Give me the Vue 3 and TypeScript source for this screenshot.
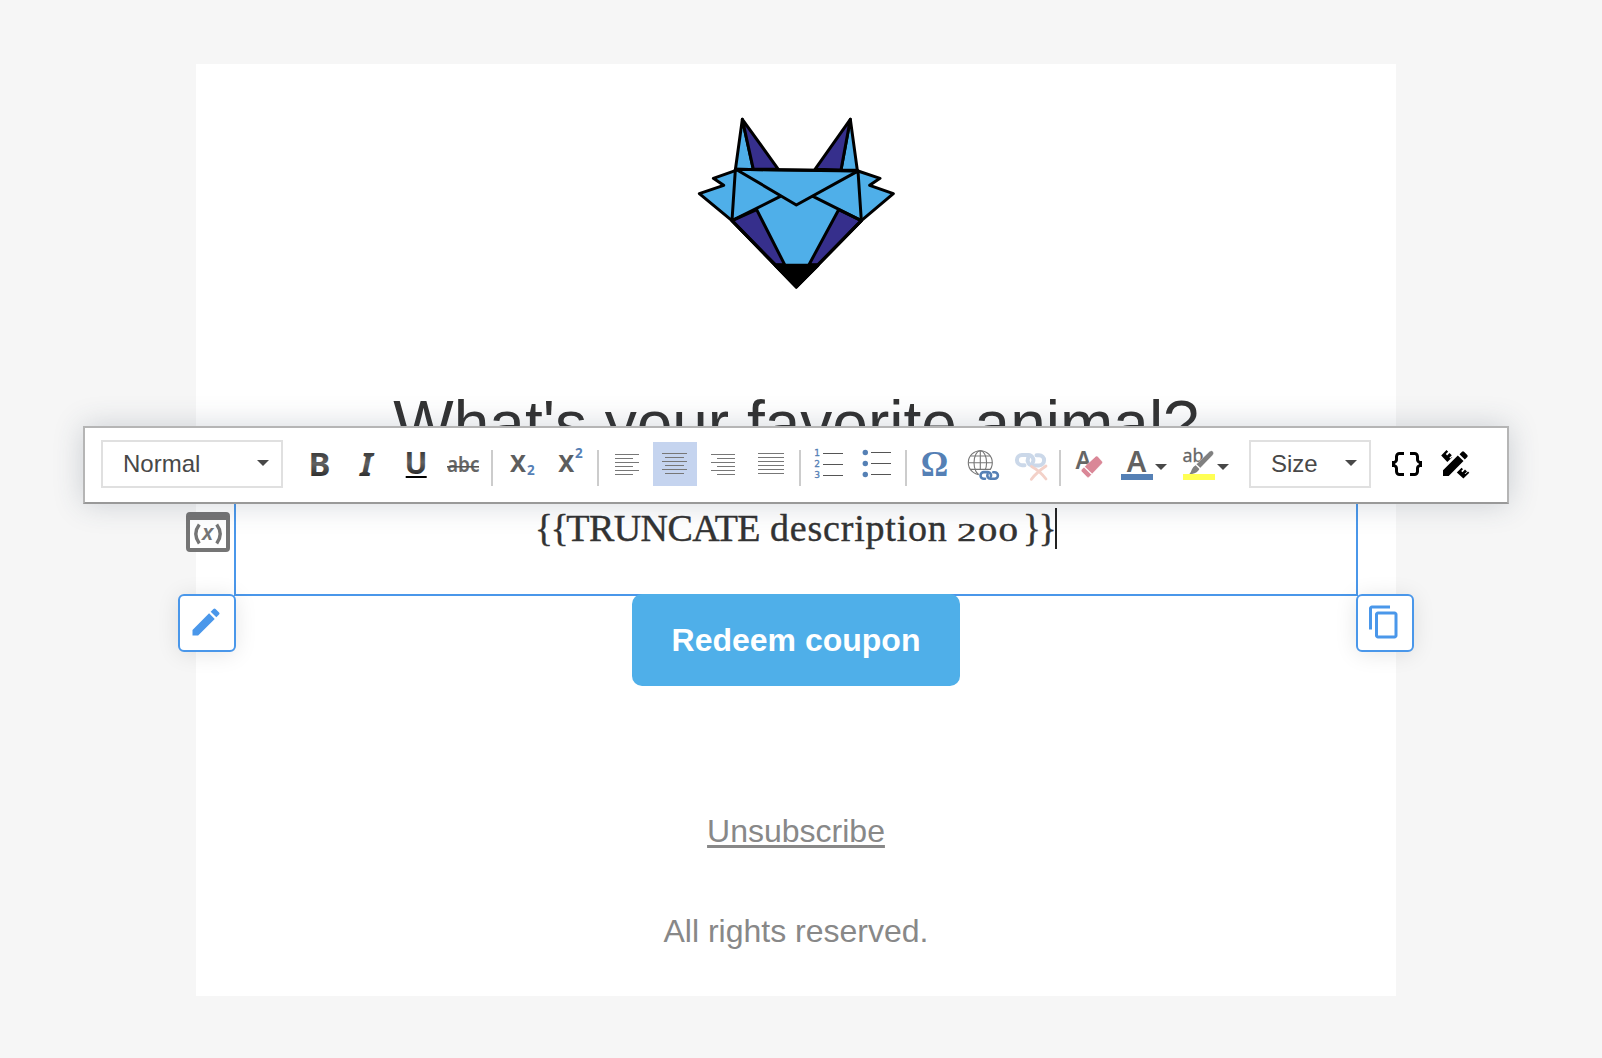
<script setup lang="ts">
const lineYs = [0, 4, 8, 12, 16, 20]

interface AlignTool {
  name: string
  top: number
  long: [number, number]
  short: [number, number]
  active?: boolean
}

const alignTools: AlignTool[] = [
  { name: 'Align left', top: 12, long: [10, 34], short: [10, 28] },
  { name: 'Center', top: 11, long: [9, 34], short: [12, 31], active: true },
  { name: 'Align right', top: 12, long: [10, 34], short: [16, 34] },
  { name: 'Justify', top: 11, long: [9, 35], short: [9, 35] },
]
</script>

<template>
  <main class="stage">
    <article class="mail">
      <svg class="logo" viewBox="-12 0 720 600" stroke="#000" stroke-width="9" stroke-linejoin="round" stroke-linecap="round">
        <path fill="#4fafe9" d="M187 58 166 210 220 208Z" />
        <path fill="#362f8c" d="M187 58 295 208H220Z" />
        <path fill="#4fafe9" d="M511 58 532 211 483 210Z" />
        <path fill="#362f8c" d="M511 58 405 208 483 210Z" />
        <path fill="#4fafe9" d="M166 212 100 235 131 256 58 281 156 362 349 561 544 362 640 281 569 256 600 235 534 213 166 208Z" />
        <path fill="#362f8c" d="M156 362 230 329 314 494H286Z" />
        <path fill="#362f8c" d="M544 362 476 329 387 494H414Z" />
        <path fill="#000" d="M286 496H414L349 561Z" />
        <path fill="none" d="M166 210 156 362 301 289M534 213 544 362 399 289M170 209 349 315 532 214M166 208 534 212M156 362 349 561 544 362" />
      </svg>

      <h1 class="title">What's your favorite animal?</h1>

      <section class="block">
        <p class="copy"><span class="brace">{{ '\u007b\u007b' }}</span><span class="caps">TRUNCATE</span><span class="word">description</span><span class="num">200</span><span class="brace">{{ '\u007d\u007d' }}</span><i class="cursor"></i></p>
        <svg class="variable" viewBox="0 0 44 40">
          <path fill="#757575" fill-rule="evenodd" d="M4 0H40Q44 0 44 4V36Q44 40 40 40H4Q0 40 0 36V4Q0 0 4 0ZM4 8V36H40V8Z" />
          <g fill="none" stroke="#757575" stroke-width="3.4">
            <path d="M13.3 12.5Q6.3 22 13.3 31.5" /><path d="M30.7 12.5Q37.7 22 30.7 31.5" />
          </g>
          <text x="16" y="28" font-family="Noto Sans, sans-serif" font-style="italic" font-weight="600" font-size="22" fill="#757575">x</text>
        </svg>
        <button class="handle edit" aria-label="Edit">
          <svg viewBox="0 0 24 24"><path d="M3 17.25V21h3.75L17.81 9.94l-3.75-3.75L3 17.25zM20.71 7.04a1 1 0 0 0 0-1.41l-2.34-2.34a1 1 0 0 0-1.41 0l-1.83 1.83 3.75 3.75 1.83-1.83z" /></svg>
        </button>
        <button class="handle duplicate" aria-label="Duplicate">
          <svg viewBox="0 0 24 24"><path d="M16 1H4c-1.1 0-2 .9-2 2v14h2V3h12V1zm3 4H8c-1.1 0-2 .9-2 2v14c0 1.1.9 2 2 2h11c1.1 0 2-.9 2-2V7c0-1.1-.9-2-2-2zm0 16H8V7h11v14z" /></svg>
        </button>
      </section>

      <a class="cta">Redeem coupon</a>
      <a class="unsubscribe">Unsubscribe</a>
      <p class="rights">All rights reserved.</p>
    </article>

    <div class="toolbar">
      <div class="select format"><span>Normal</span><i class="arrow"></i></div>

      <div class="group">
        <svg class="tool" viewBox="0 0 44 44">
          <defs><linearGradient id="ink" x1="0" y1="0" x2="0" y2="1"><stop offset="0.2" stop-color="#333" /><stop offset="0.5" stop-color="#626262" /><stop offset="0.85" stop-color="#222" /></linearGradient></defs>
          <text class="sans bold" x="11.6" y="34" font-size="33" fill="url(#ink)">B</text>
        </svg>
        <svg class="tool" viewBox="0 0 44 44"><text class="sans bold" x="15" y="34" font-size="33" font-style="italic" fill="url(#ink)">I</text></svg>
        <svg class="tool" viewBox="0 0 44 44">
          <text class="sans bold" x="11.4" y="31.7" font-size="30" textLength="23" lengthAdjust="spacingAndGlyphs" fill="url(#ink)">U</text>
          <rect x="12.7" y="34" width="21" height="2" fill="#000" />
        </svg>
        <svg class="tool" viewBox="0 0 44 44">
          <text class="sans semi" x="6" y="30" font-size="22" textLength="32.5" lengthAdjust="spacingAndGlyphs" fill="#666">abc</text>
          <rect x="6" y="24" width="32" height="1.6" fill="#555" />
        </svg>
      </div>
      <i class="divider"></i>

      <div class="group">
        <svg class="tool" viewBox="0 0 44 44">
          <text class="sans bold" x="11" y="30" font-size="22.5" textLength="16" lengthAdjust="spacingAndGlyphs" fill="#5d5d5d">X</text>
          <text class="sans bold" x="28" y="33" font-size="13.5" fill="#5580b5">2</text>
        </svg>
        <svg class="tool" viewBox="0 0 44 44">
          <text class="sans bold" x="11.3" y="30" font-size="22.5" textLength="16" lengthAdjust="spacingAndGlyphs" fill="#5d5d5d">X</text>
          <text class="sans bold" x="28" y="16" font-size="13.5" fill="#5580b5">2</text>
        </svg>
      </div>
      <i class="divider"></i>

      <div class="group">
        <svg v-for="tool in alignTools" :key="tool.name" class="tool" :class="{ active: tool.active }" viewBox="0 0 44 44" :aria-label="tool.name">
          <rect
            v-for="(y, i) in lineYs"
            :key="y"
            :x="(i % 2 ? tool.short : tool.long)[0]"
            :y="tool.top + y"
            :width="(i % 2 ? tool.short[1] - tool.short[0] : tool.long[1] - tool.long[0])"
            height="1"
            fill="#777"
          />
        </svg>
      </div>
      <i class="divider"></i>

      <div class="group">
        <svg class="tool" viewBox="0 0 44 44">
          <g font-family="DejaVu Sans, sans-serif" font-size="9" fill="#5580b5" stroke="#5580b5" stroke-width=".3">
            <text x="7.3" y="13.7">1</text><text x="7.3" y="24.8">2</text><text x="7.3" y="35.8">3</text>
          </g>
          <path d="M16 11.5H36M16 22.5H36M16 33.5H36" stroke="#555" />
        </svg>
        <svg class="tool" viewBox="0 0 44 44">
          <g fill="#5580b5"><circle cx="10.3" cy="10.5" r="2.7" /><circle cx="10.3" cy="21.5" r="2.7" /><circle cx="10.3" cy="32.5" r="2.7" /></g>
          <path d="M16 10.5H36M16 21.5H36M16 32.5H36" stroke="#555" />
        </svg>
      </div>
      <i class="divider"></i>

      <div class="group">
        <svg class="tool" viewBox="0 0 44 44"><text x="7.8" y="34" font-family="Liberation Serif, serif" font-weight="700" font-size="35" textLength="27.5" lengthAdjust="spacingAndGlyphs" fill="#5580b5">Ω</text></svg>
        <svg class="tool" viewBox="0 0 44 44" fill="none">
          <g stroke="#777" stroke-width="1.1">
            <circle cx="19.3" cy="20.7" r="12" /><ellipse cx="19.3" cy="20.7" rx="6.3" ry="12" />
            <path d="M19.3 8.7V32.7M7.3 20.7H31.3M9.3 14H29.3M9.3 27.4H29.3" />
          </g>
          <path d="M17 28H39V39H19Z" fill="#fff" />
          <g stroke="#5580b5" stroke-width="2.6" stroke-linecap="round">
            <path d="M24 36.7H22.8a3.3 3.3 0 0 1 0-6.6H27a3.3 3.3 0 0 1 2.8 4.6" />
            <path d="M32.3 30.2H33.6a3.3 3.3 0 0 1 0 6.6H29.4a3.3 3.3 0 0 1-2.8-4.6" />
          </g>
        </svg>
        <svg class="tool" viewBox="0 0 44 44" fill="none">
          <g stroke="#cbd8e9" stroke-width="4" stroke-linecap="round">
            <path d="M15.5 23.2H13a5.1 5.1 0 0 1 0-10.2H19.5a5.1 5.1 0 0 1 4.4 7.2" />
            <path d="M27.5 13.2H30a5.1 5.1 0 0 1 0 10.2H23.5a5.1 5.1 0 0 1-4.4-7.2" />
          </g>
          <path d="M22.5 24.5Q31 29 37 37M37 24Q28 30 22.3 37.3" stroke="#f3d1c8" stroke-width="2.8" stroke-linecap="round" />
        </svg>
      </div>
      <i class="divider"></i>

      <div class="group">
        <svg class="tool" viewBox="0 0 44 44">
          <text class="sans semi" x="8.6" y="27" font-size="26" textLength="16" lengthAdjust="spacingAndGlyphs" fill="#666">A</text>
          <path d="M28.7 14.4Q29.8 13.6 30.8 14.6L35.2 19.5Q36 20.5 35 21.5L22.2 35Q21 36 20 35L14.6 29.6Q13.7 28.4 14.8 27.2Z" fill="#da8797" stroke="#fff" stroke-width=".4" />
          <path d="M17 24.6 24.8 32.3" stroke="#fff" stroke-width="1.3" />
        </svg>
        <svg class="tool wide" viewBox="0 0 58 44">
          <text class="sans semi" x="11.7" y="30" font-size="29" textLength="19.6" lengthAdjust="spacingAndGlyphs" fill="#626262">A</text>
          <rect x="6" y="32" width="32" height="6" fill="#5580b5" /><path d="M40 22H52L46 28Z" fill="#484848" />
        </svg>
        <svg class="tool wide" viewBox="0 0 58 44">
          <text class="sans" x="5.6" y="20" font-size="18" textLength="21" lengthAdjust="spacingAndGlyphs" fill="#666" stroke="#666" stroke-width=".3">ab</text>
          <path d="M32.4 9.6Q34.4 7.8 36 9.4 37.4 11 35.9 12.9L23.3 26.1 19.3 22.3Z" fill="#808080" stroke="#fff" stroke-width=".4" />
          <path d="M18.6 23.2 22.4 27Q20.5 31 15 32H12.4Q14.2 30 14.8 27.6 16 24.4 18.6 23.2Z" fill="#808080" />
          <rect x="6" y="32" width="32" height="6" fill="#ffff54" /><path d="M40 22H52L46 28Z" fill="#484848" />
        </svg>
      </div>

      <div class="select size"><span>Size</span><i class="arrow"></i></div>

      <div class="group">
        <svg class="tool" viewBox="0 0 44 44">
          <path transform="translate(4 4) scale(1.5)" d="M4 7v2c0 .55-.45 1-1 1H2v4h1c.55 0 1 .45 1 1v2c0 1.65 1.35 3 3 3h3v-2H7c-.55 0-1-.45-1-1v-2c0-1.3-.84-2.42-2-2.83v-.34C5.16 11.42 6 10.3 6 9V7c0-.55.45-1 1-1h3V4H7C5.35 4 4 5.35 4 7zM21 10c-.55 0-1-.45-1-1V7c0-1.65-1.35-3-3-3h-3v2h3c.55 0 1 .45 1 1v2c0 1.3.84 2.42 2 2.83v.34c-1.16.41-2 1.52-2 2.83v2c0 .55-.45 1-1 1h-3v2h3c1.65 0 3-1.35 3-3v-2c0-.55.45-1 1-1h1v-4h-1z" />
        </svg>
        <svg class="tool" viewBox="0 0 44 44">
          <path d="M10 28.2 24.8 13.5 30.5 19.1 15.7 34H10ZM26.5 12.2 29 9.7Q30 8.8 31 9.7L34.3 13Q35.2 14 34.3 15L31.8 17.5Z" />
          <path d="M8.2 13.4 13.5 8 15.2 9.7 12.8 12.1 14.1 13.4 16.5 11 18.8 13.3 16.4 15.7 17.3 16.6 19 15 19.3 15.3 14.3 20Z" />
          <path d="M23.8 30.6 28.6 25.8 30 27.2 28.2 29 29.5 30.3 32 27.6 34 29.6 31.5 32 32.5 31.9 35 29.4 36.3 30.7 30.4 36.5Z" />
        </svg>
      </div>
    </div>
  </main>
</template>

<style>
body { background: #f6f6f6; }
</style>

<style scoped>
.stage { position: relative; box-sizing: border-box; width: 1602px; height: 1058px; padding: 64px 206px 62px 196px; overflow: hidden; background: #f6f6f6; font-family: "Liberation Sans", Arial, sans-serif; }
.mail { display: flex; flex-direction: column; align-items: center; box-sizing: border-box; width: 1200px; height: 932px; padding-top: 36px; background: #fff; }
.logo { display: block; flex: none; width: 240px; height: 200px; }
.title { margin: 88px 0 0; font-size: 64px; line-height: 72px; font-weight: 400; color: #333; white-space: nowrap; }

.block { position: relative; box-sizing: border-box; width: 1124px; height: 136px; padding-top: 44px; border: 2px solid #4a97ea; }
.copy { display: flex; align-items: baseline; justify-content: center; height: 44px; margin: 0; font: 38px/44px "Liberation Serif", serif; color: #333; -webkit-text-stroke: .4px #333; white-space: nowrap; }
.brace { letter-spacing: -2.5px; }
.caps { letter-spacing: -.6px; }
.word { margin-left: 10px; letter-spacing: .8px; }
.num { display: inline-block; width: 63px; margin: 0 3px 0 9px; font-size: 26px; letter-spacing: .8px; transform: scaleX(1.5); transform-origin: 0 50%; }
.cursor { align-self: flex-start; width: 2px; height: 41px; margin: 2px 0 0 1px; background: #222; }

.variable { position: absolute; left: -50px; top: 50px; width: 44px; height: 40px; background: linear-gradient(#fff, #fff) 4px 8px / 36px 28px no-repeat; }
.handle { position: absolute; top: 132px; box-sizing: border-box; width: 58px; height: 58px; padding: 0 2px 3px 0; border: 2px solid #4a97ea; border-radius: 6px; background: #fff; display: flex; align-items: center; justify-content: center; box-shadow: 0 2px 22px rgba(0, 0, 0, .1); }
.handle svg { width: 36px; height: 36px; fill: #4a97ea; }
.edit { left: -58px; }
.duplicate { right: -58px; }

.cta { position: relative; flex: none; width: 328px; height: 92px; margin-top: -2px; border-radius: 10px; background: #4fafe9; color: #fff; font-size: 32px; font-weight: 700; line-height: 92px; text-align: center; }
.unsubscribe { margin-top: 127px; font-size: 32px; line-height: 36px; color: #888; text-decoration: underline; text-decoration-thickness: 3px; text-underline-offset: 3px; text-decoration-skip-ink: none; }
.rights { margin: 64px 0 0; font-size: 32px; line-height: 36px; color: #888; }

.toolbar { position: absolute; left: 83px; top: 426px; z-index: 5; box-sizing: border-box; width: 1426px; height: 78px; padding: 0 0 2px 16px; border: 2px solid #b5b5b5; border-bottom-color: #999; background: #fff; display: flex; align-items: center; box-shadow: 0 0 30px rgba(50, 70, 90, .22); }
.select { display: flex; flex: none; align-items: center; justify-content: space-between; box-sizing: border-box; height: 48px; padding: 0 12px 0 20px; border: 2px solid #e0e0e0; color: #484848; font-size: 24px; line-height: 44px; }
.format { width: 182px; margin-right: 14px; }
.size { width: 122px; margin: 0 14px; }
.arrow { width: 0; height: 0; margin-top: -2px; border: 6px solid transparent; border-top-color: #484848; border-bottom: 0; }
.group { display: flex; flex: none; gap: 4px; }
.tool { display: block; width: 44px; height: 44px; }
.tool.wide { width: 58px; }
.tool.active { background: #c5d4ef; }
.divider { flex: none; width: 2px; height: 36px; margin: 8px 6px 0; background: #ccc; }
.sans { font-family: "Noto Sans", "Open Sans", sans-serif; }
.semi { font-weight: 600; }
.bold { font-weight: 700; }
</style>
